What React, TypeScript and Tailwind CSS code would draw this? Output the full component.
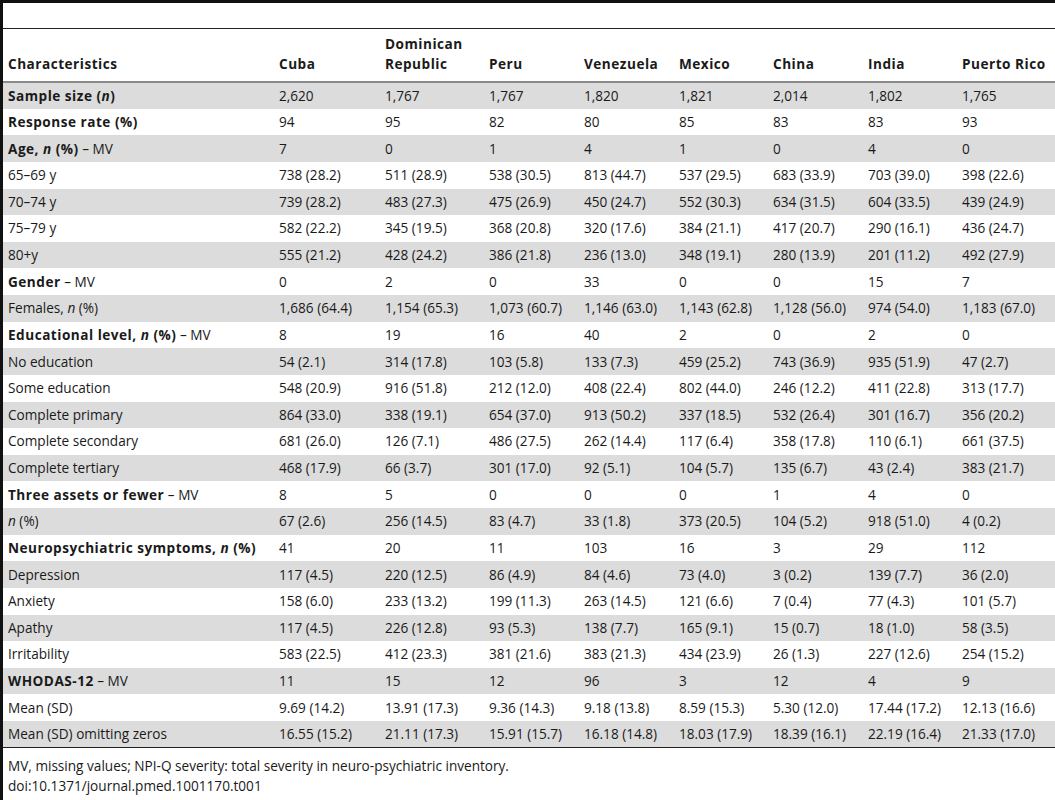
import type { ReactNode } from 'react';

const countries = ['Cuba', 'Dominican Republic', 'Peru', 'Venezuela', 'Mexico', 'China', 'India', 'Puerto Rico'];
const colWidths = ['w-[270px]', 'w-[106px]', 'w-[104px]', 'w-[95px]', 'w-[95px]', 'w-[94px]', 'w-[95px]', 'w-[94px]', 'w-[100px]'];

const N = () => <i>n</i>;
const B = ({ children }: { children: ReactNode }) => <b className="tracking-[0.5px]">{children}</b>;
const MV = () => <span className="font-normal tracking-normal"> – MV</span>;

const rows: { label: ReactNode; values: string[] }[] = [
  { label: <B>Sample size (<N />)</B>, values: ['2,620', '1,767', '1,767', '1,820', '1,821', '2,014', '1,802', '1,765'] },
  { label: <B>Response rate (%)</B>, values: ['94', '95', '82', '80', '85', '83', '83', '93'] },
  { label: <B>Age, <N /> (%)<MV /></B>, values: ['7', '0', '1', '4', '1', '0', '4', '0'] },
  { label: '65–69 y', values: ['738 (28.2)', '511 (28.9)', '538 (30.5)', '813 (44.7)', '537 (29.5)', '683 (33.9)', '703 (39.0)', '398 (22.6)'] },
  { label: '70–74 y', values: ['739 (28.2)', '483 (27.3)', '475 (26.9)', '450 (24.7)', '552 (30.3)', '634 (31.5)', '604 (33.5)', '439 (24.9)'] },
  { label: '75–79 y', values: ['582 (22.2)', '345 (19.5)', '368 (20.8)', '320 (17.6)', '384 (21.1)', '417 (20.7)', '290 (16.1)', '436 (24.7)'] },
  { label: '80+y', values: ['555 (21.2)', '428 (24.2)', '386 (21.8)', '236 (13.0)', '348 (19.1)', '280 (13.9)', '201 (11.2)', '492 (27.9)'] },
  { label: <B>Gender<MV /></B>, values: ['0', '2', '0', '33', '0', '0', '15', '7'] },
  { label: <>Females, <N /> (%)</>, values: ['1,686 (64.4)', '1,154 (65.3)', '1,073 (60.7)', '1,146 (63.0)', '1,143 (62.8)', '1,128 (56.0)', '974 (54.0)', '1,183 (67.0)'] },
  { label: <B>Educational level, <N /> (%)<MV /></B>, values: ['8', '19', '16', '40', '2', '0', '2', '0'] },
  { label: 'No education', values: ['54 (2.1)', '314 (17.8)', '103 (5.8)', '133 (7.3)', '459 (25.2)', '743 (36.9)', '935 (51.9)', '47 (2.7)'] },
  { label: 'Some education', values: ['548 (20.9)', '916 (51.8)', '212 (12.0)', '408 (22.4)', '802 (44.0)', '246 (12.2)', '411 (22.8)', '313 (17.7)'] },
  { label: 'Complete primary', values: ['864 (33.0)', '338 (19.1)', '654 (37.0)', '913 (50.2)', '337 (18.5)', '532 (26.4)', '301 (16.7)', '356 (20.2)'] },
  { label: 'Complete secondary', values: ['681 (26.0)', '126 (7.1)', '486 (27.5)', '262 (14.4)', '117 (6.4)', '358 (17.8)', '110 (6.1)', '661 (37.5)'] },
  { label: 'Complete tertiary', values: ['468 (17.9)', '66 (3.7)', '301 (17.0)', '92 (5.1)', '104 (5.7)', '135 (6.7)', '43 (2.4)', '383 (21.7)'] },
  { label: <B>Three assets or fewer<MV /></B>, values: ['8', '5', '0', '0', '0', '1', '4', '0'] },
  { label: <><N /> (%)</>, values: ['67 (2.6)', '256 (14.5)', '83 (4.7)', '33 (1.8)', '373 (20.5)', '104 (5.2)', '918 (51.0)', '4 (0.2)'] },
  { label: <B>Neuropsychiatric symptoms, <N /> (%)</B>, values: ['41', '20', '11', '103', '16', '3', '29', '112'] },
  { label: 'Depression', values: ['117 (4.5)', '220 (12.5)', '86 (4.9)', '84 (4.6)', '73 (4.0)', '3 (0.2)', '139 (7.7)', '36 (2.0)'] },
  { label: 'Anxiety', values: ['158 (6.0)', '233 (13.2)', '199 (11.3)', '263 (14.5)', '121 (6.6)', '7 (0.4)', '77 (4.3)', '101 (5.7)'] },
  { label: 'Apathy', values: ['117 (4.5)', '226 (12.8)', '93 (5.3)', '138 (7.7)', '165 (9.1)', '15 (0.7)', '18 (1.0)', '58 (3.5)'] },
  { label: 'Irritability', values: ['583 (22.5)', '412 (23.3)', '381 (21.6)', '383 (21.3)', '434 (23.9)', '26 (1.3)', '227 (12.6)', '254 (15.2)'] },
  { label: <B>WHODAS-12<MV /></B>, values: ['11', '15', '12', '96', '3', '12', '4', '9'] },
  { label: 'Mean (SD)', values: ['9.69 (14.2)', '13.91 (17.3)', '9.36 (14.3)', '9.18 (13.8)', '8.59 (15.3)', '5.30 (12.0)', '17.44 (17.2)', '12.13 (16.6)'] },
  { label: 'Mean (SD) omitting zeros', values: ['16.55 (15.2)', '21.11 (17.3)', '15.91 (15.7)', '16.18 (14.8)', '18.03 (17.9)', '18.39 (16.1)', '22.19 (16.4)', '21.33 (17.0)'] },
];

export default function App() {
  return (
    <div className="w-[1055px] h-[800px] bg-white text-[#1a1a1a] text-[13.6px] overflow-hidden border-l-[3px] border-[#111]" style={{ fontFamily: '"Open Sans", "Liberation Sans", sans-serif' }}>
      <div className="border-t-[3px] border-[#111] h-[29px] border-b border-b-[#222]" />
      <table className="table-fixed border-collapse w-[1052px]">
        <colgroup>
          {colWidths.map((w, i) => (
            <col key={i} className={w} />
          ))}
        </colgroup>
        <thead>
          <tr className="h-[53px] border-b-2 border-[#8a8a8a]">
            <th className="text-left align-bottom font-bold tracking-[0.5px] pl-[5px] pb-[7px] leading-[20px]">Characteristics</th>
            {countries.map((c) => (
              <th key={c} className="text-left align-bottom font-bold tracking-[0.5px] pl-[6px] pb-[7px] leading-[20px]">
                {c}
              </th>
            ))}
          </tr>
        </thead>
        <tbody>
          {rows.map((r, i) => (
            <tr key={i} className={`h-[26.64px] ${i % 2 === 0 ? 'bg-[#dcdcdc]' : 'bg-white'} ${i === rows.length - 1 ? 'border-b border-[#222]' : ''}`}>
              <td className="pl-[5px] leading-[18px] whitespace-nowrap">{r.label}</td>
              {r.values.map((v, j) => (
                <td key={j} className="pl-[6px] leading-[18px] whitespace-nowrap">
                  {v}
                </td>
              ))}
            </tr>
          ))}
        </tbody>
      </table>
      <div className="pl-[5px] pt-[8px] leading-[20px]">
        <p>MV, missing values; NPI-Q severity: total severity in neuro-psychiatric inventory.</p>
        <p>doi:10.1371/journal.pmed.1001170.t001</p>
      </div>
    </div>
  );
}
